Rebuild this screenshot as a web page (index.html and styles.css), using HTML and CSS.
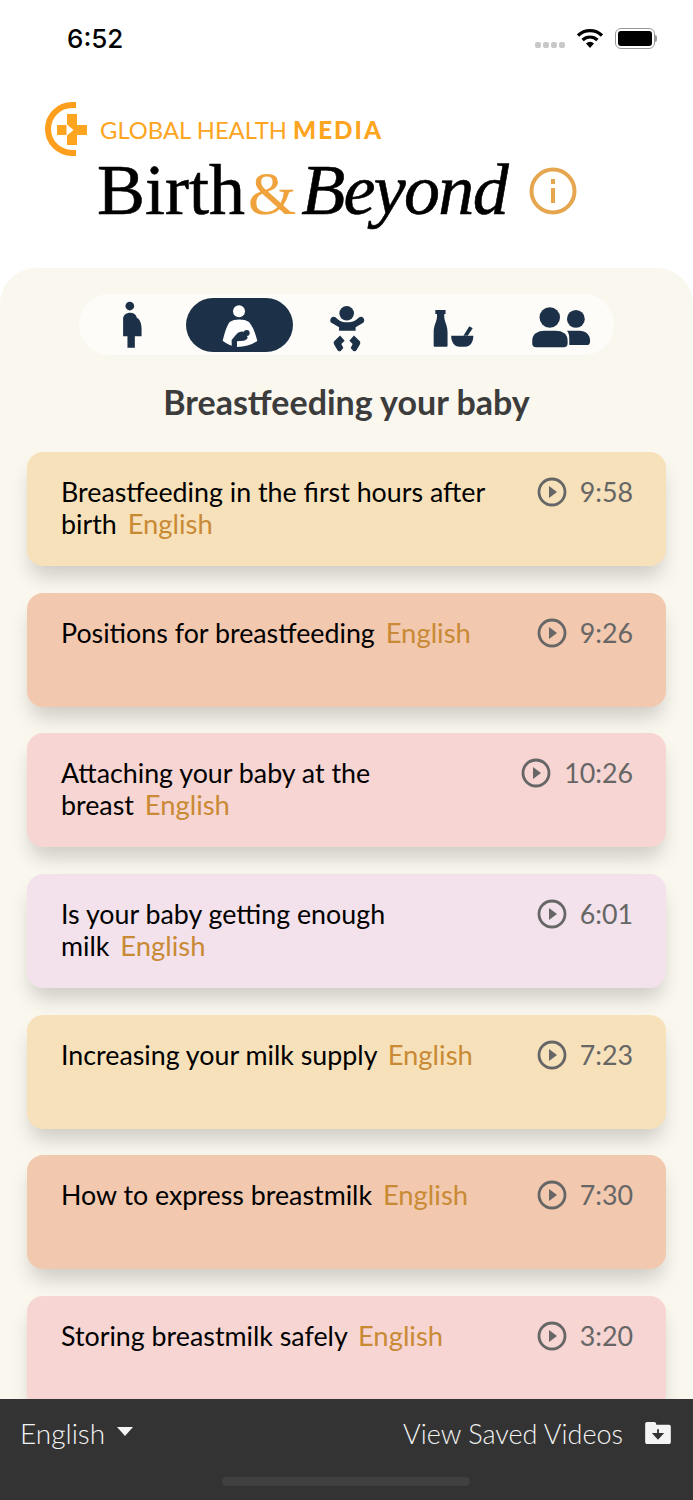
FILE: index.html
```html
<!DOCTYPE html>
<html lang="en">

<head>
    <meta charset="utf-8">
    <meta name="viewport" content="width=device-width, initial-scale=1.0">
    <title>Birth &amp; Beyond</title>
    <link rel="stylesheet" href="styles.css">
</head>

<body>
    <div class="screen">
        <div class="status">
            <span class="clock">6:52</span>
            <div class="status-icons">
                <div class="signal"><i></i><i></i><i></i><i></i></div>
                <svg class="wifi" width="26" height="21" viewBox="0 0 26 21">
                    <path d="M1 7.5a17 17 0 0 1 24 0" fill="none" stroke="#000" stroke-width="3.2" />
                    <path d="M5.6 12a10.600 10.600 0 0 1 14.800 0" fill="none" stroke="#000" stroke-width="3.200" />
                    <path d="M9 15.500a5.500 5.500 0 0 1 8 0L13 20z" fill="#000" />
                </svg>
                <div class="battery"><div class="battery-fill"></div></div>
                <div class="battery-nub"></div>
            </div>
        </div>

        <header class="brand">
            <div class="ghm">
                <svg class="ghm-logo" width="45" height="54" viewBox="0 0 45 54">
                    <path d="M31 3H27A24 24 0 0 0 27 51H31" fill="none" stroke="#fd9f1c" stroke-width="6" />
                    <path d="M22 12H32V23H42V33H32V43H22V33H12V23H22Z" fill="#fda51f" />
                    <path d="M21.500 22L28.500 28L21.500 34Z" fill="#fff" />
                </svg>
                <span class="ghm-name">GLOBAL HEALTH <b>MEDIA</b></span>
            </div>
            <div class="title-row">
                <h1 class="title">Birth<span class="amp">&amp;</span><em>Beyond</em></h1>
                <svg class="info" width="48" height="48" viewBox="0 0 48 48">
                    <circle cx="24" cy="24" r="21.500" fill="none" stroke="#e6a64f" stroke-width="4" />
                    <rect x="22" y="12" width="4" height="5" fill="#e6a64f" />
                    <rect x="22" y="21" width="4" height="15" fill="#e6a64f" />
                </svg>
            </div>
        </header>

        <main class="panel">
            <nav class="tabs">
                <button class="tab">
                    <svg width="19" height="47" viewBox="159 52 56 140">
                        <circle cx="179" cy="67" r="13" />
                        <path d="M159 157V105C159 93 170 87 180 87C190 87 198 92 200 102C210 108 214 120 214 135V157H194V191H172V157Z" />
                    </svg>
                </button>
                <button class="tab tab-active">
                    <svg width="36" height="44" viewBox="455 60 108 132">
                        <circle cx="506" cy="82" r="18" fill="#fff" />
                        <path d="M478 114C492 104 522 104 536 114C548 128 556 150 561 171C545 182 525 189 499 189C480 185 468 178 457 170C462 150 468 128 478 114Z" fill="#fff" />
                        <circle cx="529" cy="147" r="9" fill="#1c3148" />
                        <path d="M497 152C505 143 517 140 523 145L531 158C534 162 528 168 520 170L500 172V192H484V168C488 163 492 158 497 152Z" fill="#1c3148" />
                    </svg>
                </button>
                <button class="tab tab-low">
                    <svg width="36" height="47" viewBox="775 60 108 142">
                        <circle cx="828" cy="85" r="22" />
                        <path d="M785 96C790 94 794 96 800 102C810 110 818 112 829 112C840 112 850 110 860 102C866 96 870 94 875 96C882 100 883 108 878 114L855 127V138H805V127L782 114C776 108 778 100 785 96Z" />
                        <path d="M808 152L822 168L812 178L818 190L810 199C806 201 802 199 800 196L791 181C788 176 788 172 791 169Z" />
                        <path d="M850 152L836 168L846 178L840 190L848 199C852 201 856 199 858 196L867 181C870 176 870 172 867 169Z" />
                    </svg>
                </button>
                <button class="tab">
                    <svg width="41" height="39" viewBox="338 75 124 116">
                        <path d="M345 77H376V89H372V100C374 115 382 125 382 145V185Q382 188 379 188H343Q340 188 340 185V145C340 125 348 115 350 100V89H345Z" />
                        <path d="M393 155H460C460 175 450 188 435 188H418C403 188 393 175 393 155Z" />
                        <path d="M430 155L448 126L458 132L443 155Z" />
                    </svg>
                </button>
                <button class="tab">
                    <svg width="60" height="41" viewBox="630 68 180 124">
                        <circle cx="686" cy="100" r="31" />
                        <path d="M633 178V170C633 150 650 140 670 140H703C725 140 740 150 740 170V178Q740 190 728 190H645Q633 190 633 178Z" />
                        <circle cx="765" cy="104" r="27" />
                        <path d="M738 140H775C795 140 808 152 808 170V172Q808 183 797 183H745V170C745 158 745 148 738 140Z" />
                    </svg>
                </button>
            </nav>

            <h2 class="section-title">Breastfeeding your baby</h2>

            <section class="videos">
                <article class="video peach">
                    <p class="video-name">Breastfeeding in the first hours after birth <span class="lang">English</span></p>
                    <div class="duration"><svg class="play" viewBox="0 0 30 30"><circle cx="15" cy="15" r="13" /><path d="M12 9l8 6-8 6z" /></svg>9:58</div>
                </article>
                <article class="video salmon">
                    <p class="video-name">Positions for breastfeeding <span class="lang">English</span></p>
                    <div class="duration"><svg class="play" viewBox="0 0 30 30"><circle cx="15" cy="15" r="13" /><path d="M12 9l8 6-8 6z" /></svg>9:26</div>
                </article>
                <article class="video pink">
                    <p class="video-name">Attaching your baby at the<br>breast <span class="lang">English</span></p>
                    <div class="duration"><svg class="play" viewBox="0 0 30 30"><circle cx="15" cy="15" r="13" /><path d="M12 9l8 6-8 6z" /></svg>10:26</div>
                </article>
                <article class="video lilac">
                    <p class="video-name">Is your baby getting enough<br>milk <span class="lang">English</span></p>
                    <div class="duration"><svg class="play" viewBox="0 0 30 30"><circle cx="15" cy="15" r="13" /><path d="M12 9l8 6-8 6z" /></svg>6:01</div>
                </article>
                <article class="video peach">
                    <p class="video-name">Increasing your milk supply <span class="lang">English</span></p>
                    <div class="duration"><svg class="play" viewBox="0 0 30 30"><circle cx="15" cy="15" r="13" /><path d="M12 9l8 6-8 6z" /></svg>7:23</div>
                </article>
                <article class="video salmon">
                    <p class="video-name">How to express breastmilk <span class="lang">English</span></p>
                    <div class="duration"><svg class="play" viewBox="0 0 30 30"><circle cx="15" cy="15" r="13" /><path d="M12 9l8 6-8 6z" /></svg>7:30</div>
                </article>
                <article class="video pink">
                    <p class="video-name">Storing breastmilk safely <span class="lang">English</span></p>
                    <div class="duration"><svg class="play" viewBox="0 0 30 30"><circle cx="15" cy="15" r="13" /><path d="M12 9l8 6-8 6z" /></svg>3:20</div>
                </article>
            </section>
        </main>

        <footer class="bottom">
            <div class="bottom-row">
                <div class="language">English<span class="caret"></span></div>
                <div class="saved">View Saved Videos
                    <svg width="26" height="22" viewBox="0 0 28 24">
                        <path d="M2 0h8c1 0 2 1 2 2v1h14c1 0 2 1 2 2v17c0 1-1 2-2 2H2c-1 0-2-1-2-2V2C0 1 1 0 2 0z" fill="#f4f4f4" />
                        <path d="M14 8v7M9.500 13l4.500 5 4.500-5z" fill="#333" stroke="#333" stroke-width="2" />
                    </svg>
                </div>
            </div>
            <div class="home-bar"></div>
        </footer>
    </div>
</body>

</html>
```

FILE: styles.css
```css
* {
    box-sizing: border-box;
}

body {
    margin: 0;
    background-color: #fff;
    font-family: Lato, "Liberation Sans", sans-serif;
}

.screen {
    height: 1500px;
    display: flex;
    flex-direction: column;
    overflow: hidden;
}

.status {
    height: 76px;
    flex: none;
    display: flex;
    justify-content: space-between;
    align-items: center;
    padding: 0 36px 0 67px;
}

.clock {
    font-family: Inter, "Liberation Sans", sans-serif;
    font-size: 26px;
    font-weight: 500;
    color: #000;
}

.status-icons {
    display: flex;
    align-items: center;
}

.signal {
    display: flex;
    gap: 2px;
    margin: 13px 12px 0 0;
}

.signal i {
    width: 6px;
    height: 6px;
    border-radius: 2px;
    background-color: #c8c8c8;
}

.wifi {
    margin-right: 12px;
}

.battery {
    width: 40px;
    height: 21px;
    padding: 2px;
    border: 1.500px solid #999;
    border-radius: 6px;
}

.battery-fill {
    height: 100%;
    border-radius: 3px;
    background-color: #000;
}

.battery-nub {
    width: 2px;
    height: 7px;
    border-radius: 0 2px 2px 0;
    background-color: #999;
}

.brand {
    height: 192px;
    flex: none;
}

.ghm {
    display: flex;
    align-items: center;
    padding: 27px 0 0 45px;
    height: 78px;
}

.ghm-name {
    margin: 1px 0 0 10px;
    font-size: 23.800px;
    font-weight: 400;
    color: #fda51f;
    white-space: nowrap;
}

.ghm-name b {
    font-size: 24.300px;
    font-weight: 900;
    letter-spacing: 2px;
}

.title-row {
    display: flex;
    align-items: center;
    padding-left: 97px;
}

.title {
    margin: 0;
    display: flex;
    align-items: baseline;
    font-family: "Liberation Serif", serif;
    font-size: 72px;
    font-weight: 400;
    line-height: 72px;
    color: #000;
    -webkit-text-stroke: 0.600px #000;
}

.title em {
    margin-left: 5px;
    letter-spacing: -1.700px;
}

.amp {
    margin-left: 3px;
    font-size: 62px;
    color: #f0a33c;
    -webkit-text-stroke: 0;
}

.info {
    margin: 0 0 1px 22px;
}

.panel {
    flex: 1;
    min-height: 0;
    overflow: hidden;
    background-color: #faf7ef;
    border-radius: 36px 36px 0 0;
    padding: 26px 27px 0;
}

.tabs {
    width: 535px;
    height: 61px;
    margin: 0 auto;
    padding: 4px 0;
    display: flex;
    justify-content: space-between;
    background-color: #fdfcf8;
    border-radius: 31px;
}

.tab {
    width: 107px;
    height: 54px;
    padding: 0 0 4px;
    border: none;
    border-radius: 27px;
    background: none;
    display: flex;
    justify-content: center;
    align-items: flex-end;
}

.tab svg {
    fill: #1c3148;
}

.tab-low {
    padding-bottom: 0;
}

.tab-active {
    background-color: #1c3148;
}

.section-title {
    margin: 26px 0 29px;
    font-size: 34px;
    line-height: 42px;
    font-weight: 700;
    text-align: center;
    color: #3c3c3c;
}

.videos {
    display: flex;
    flex-direction: column;
    gap: 26.700px;
}

.video {
    height: 114px;
    flex: none;
    padding: 24px 33px 0 34px;
    display: flex;
    justify-content: space-between;
    border-radius: 16px;
    box-shadow: 0 14px 20px -4px rgba(0, 0, 0, 0.18);
}

.peach {
    background-color: #f7e1ba;
}

.salmon {
    background-color: #f2c8ae;
}

.pink {
    background-color: #f7d5d2;
}

.lilac {
    background-color: #f3e2eb;
}

.video-name {
    margin: 0;
    width: 440px;
    font-size: 26.800px;
    line-height: 32px;
    color: #000;
}

.lang {
    margin-left: 4px;
    font-size: 27.400px;
    color: #c98a35;
}

.duration {
    display: flex;
    align-items: center;
    align-self: flex-start;
    height: 32px;
    font-size: 26.800px;
    color: #666;
    white-space: nowrap;
}

.play {
    width: 30px;
    height: 30px;
    margin-right: 13px;
}

.play circle {
    fill: none;
    stroke: #666;
    stroke-width: 2.800;
}

.play path {
    fill: #666;
}

.bottom {
    height: 101px;
    flex: none;
    background-color: #333;
    color: #f4f4f4;
    padding: 16px 22px 0 20px;
}

.bottom-row {
    display: flex;
    justify-content: space-between;
    align-items: center;
    font-size: 27px;
    font-weight: 300;
    height: 36px;
}

.language {
    display: flex;
    align-items: center;
    font-size: 28px;
}

.caret {
    width: 0;
    height: 0;
    margin: 0 0 4px 12px;
    border-left: 8px solid transparent;
    border-right: 8px solid transparent;
    border-top: 9px solid #f4f4f4;
}

.saved {
    display: flex;
    align-items: center;
    gap: 22px;
}

.home-bar {
    width: 248px;
    height: 9px;
    margin: 26px auto 0;
    border-radius: 5px;
    background-color: #404040;
}
```
